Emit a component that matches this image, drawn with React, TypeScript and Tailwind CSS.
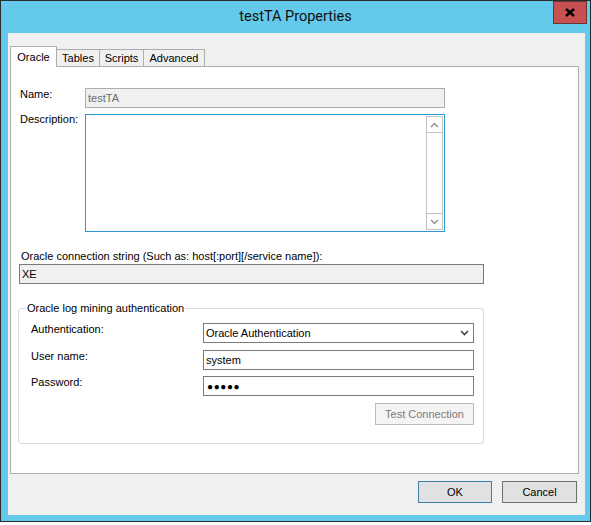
import React from "react";

const ui = { fontFamily: "'Liberation Sans', Arial, sans-serif" };

const CloseGlyph = () => (
  <svg width="10" height="9" viewBox="0 0 10 9">
    <path d="M1 1 L9 8 M9 1 L1 8" stroke="#000" strokeWidth="2.4" />
  </svg>
);

const ScrollArrow = ({ up }: { up?: boolean }) => (
  <svg width="9" height="6" viewBox="0 0 9 6">
    <path
      d={up ? "M1 5 L4.5 1.5 L8 5" : "M1 1 L4.5 4.5 L8 1"}
      stroke="#858585"
      strokeWidth="1.2"
      fill="none"
    />
  </svg>
);

const tabs = [
  { label: "Oracle", w: "w-[47px]" },
  { label: "Tables", w: "w-[44px]" },
  { label: "Scripts", w: "w-[45px]" },
  { label: "Advanced", w: "w-[62px]" },
];

export default function App() {
  return (
    <div className="h-[525px] w-[591px] bg-white text-[11px] text-black" style={ui}>
      <div className="flex h-[522px] w-[591px] flex-col border border-[#2b2b2b] bg-[#64c9ea]">
        {/* title bar */}
        <div className="relative flex h-[32px] items-center justify-center">
          <span
            className="text-[14.5px] text-[#111]"
            style={{ fontFamily: "Roboto, 'Open Sans', sans-serif" }}
          >
            testTA Properties
          </span>
          <div className="absolute right-[3px] top-0 flex h-[23px] w-[34px] items-center justify-center border border-[#6b3333] bg-[#c75050]">
            <CloseGlyph />
          </div>
        </div>

        {/* client area */}
        <div className="ml-[7px] mr-[5px] flex flex-1 flex-col bg-[#f0f0f0] pl-[2px] pr-[6px] pt-[13px]">
          {/* tab strip */}
          <div className="flex h-[21px] items-start">
            {tabs.map((t, i) =>
              i === 0 ? (
                <div
                  key={t.label}
                  className={`relative z-10 flex h-[21px] ${t.w} justify-center border border-b-0 border-[#adadad] bg-white pt-[2px]`}
                >
                  {t.label}
                </div>
              ) : (
                <div
                  key={t.label}
                  className={`-ml-px mt-[3px] flex h-[18px] ${t.w} items-center justify-center border border-[#adadad] bg-[#f0f0f0]`}
                >
                  {t.label}
                </div>
              )
            )}
          </div>

          {/* tab page */}
          <div className="-mt-px flex h-[408px] flex-col border border-[#adadad] bg-white pl-[8px]">
            {/* name */}
            <div className="mt-[21px] flex items-start">
              <div className="-mt-[2px] ml-px w-[65px]">Name:</div>
              <div className="flex h-[20px] w-[360px] items-center border border-[#adadad] bg-[#f0f0f0] pl-[2px] text-[#6d6d6d]">
                testTA
              </div>
            </div>

            {/* description */}
            <div className="mt-[6px] flex items-start">
              <div className="-mt-[3px] ml-px w-[65px]">Description:</div>
              <div className="flex h-[118px] w-[360px] justify-end border border-[#2b9ad8] bg-white p-[1px]">
                <div className="flex w-[17px] flex-col border border-[#c2c2c2]">
                  <div className="flex h-[16px] items-center justify-center border-b border-[#c2c2c2]">
                    <ScrollArrow up />
                  </div>
                  <div className="flex-1" />
                  <div className="flex h-[16px] items-center justify-center border-t border-[#c2c2c2]">
                    <ScrollArrow />
                  </div>
                </div>
              </div>
            </div>

            {/* connection string */}
            <div className="ml-[2px] mt-[17px] h-[14px] leading-[14px]">
              Oracle connection string (Such as: host[:port][/service name]):
            </div>
            <div className="mt-[1px] flex h-[20px] w-[465px] items-center border border-[#7a7a7a] bg-[#f0f0f0] pl-[2px]">
              XE
            </div>

            {/* log mining group */}
            <fieldset className="-ml-px mt-[17px] h-[143px] w-[466px] rounded-[3px] border border-[#dcdcdc] pl-[12px] pr-[8px]">
              <legend className="ml-[-5px] px-[1px] leading-[14px]">
                Oracle log mining authentication
              </legend>
              <div className="mt-[8px] flex flex-col">
                <div className="flex items-start">
                  <div className="-mt-[2px] w-[172px]">Authentication:</div>
                  <div className="flex h-[20px] w-[271px] items-center justify-between border border-[#7a7a7a] bg-white pl-[2px] pr-[4px]">
                    <span>Oracle Authentication</span>
                    <svg width="9" height="6" viewBox="0 0 9 6">
                      <path d="M1 1 L4.5 4.5 L8 1" stroke="#444" strokeWidth="1.6" fill="none" />
                    </svg>
                  </div>
                </div>
                <div className="mt-[7px] flex items-start">
                  <div className="-mt-[2px] w-[172px]">User name:</div>
                  <div className="flex h-[20px] w-[271px] items-center border border-[#7a7a7a] bg-white pl-[2px]">
                    system
                  </div>
                </div>
                <div className="mt-[6px] flex items-start">
                  <div className="-mt-[2px] w-[172px]">Password:</div>
                  <div className="flex h-[20px] w-[271px] items-center border border-[#7a7a7a] bg-white pl-[3px] text-[10px] tracking-[0.6px]">
                    ●●●●●
                  </div>
                </div>
                <div className="mt-[7px] flex justify-end">
                  <div className="mr-[1px] flex h-[22px] w-[99px] items-center justify-center border border-[#bcbcbc] bg-[#f4f4f4] text-[#7a7a7a]">
                    Test Connection
                  </div>
                </div>
              </div>
            </fieldset>
          </div>

          {/* dialog buttons */}
          <div className="mt-[7px] flex justify-end gap-[10px] pr-[2px]">
            <div className="flex h-[22px] w-[74px] items-center justify-center border border-[#3c7fb1] bg-[#e1e1e1]">
              OK
            </div>
            <div className="flex h-[22px] w-[75px] items-center justify-center border border-[#707070] bg-[#e1e1e1]">
              Cancel
            </div>
          </div>
        </div>
        <div className="h-[6px]" />
      </div>
    </div>
  );
}
